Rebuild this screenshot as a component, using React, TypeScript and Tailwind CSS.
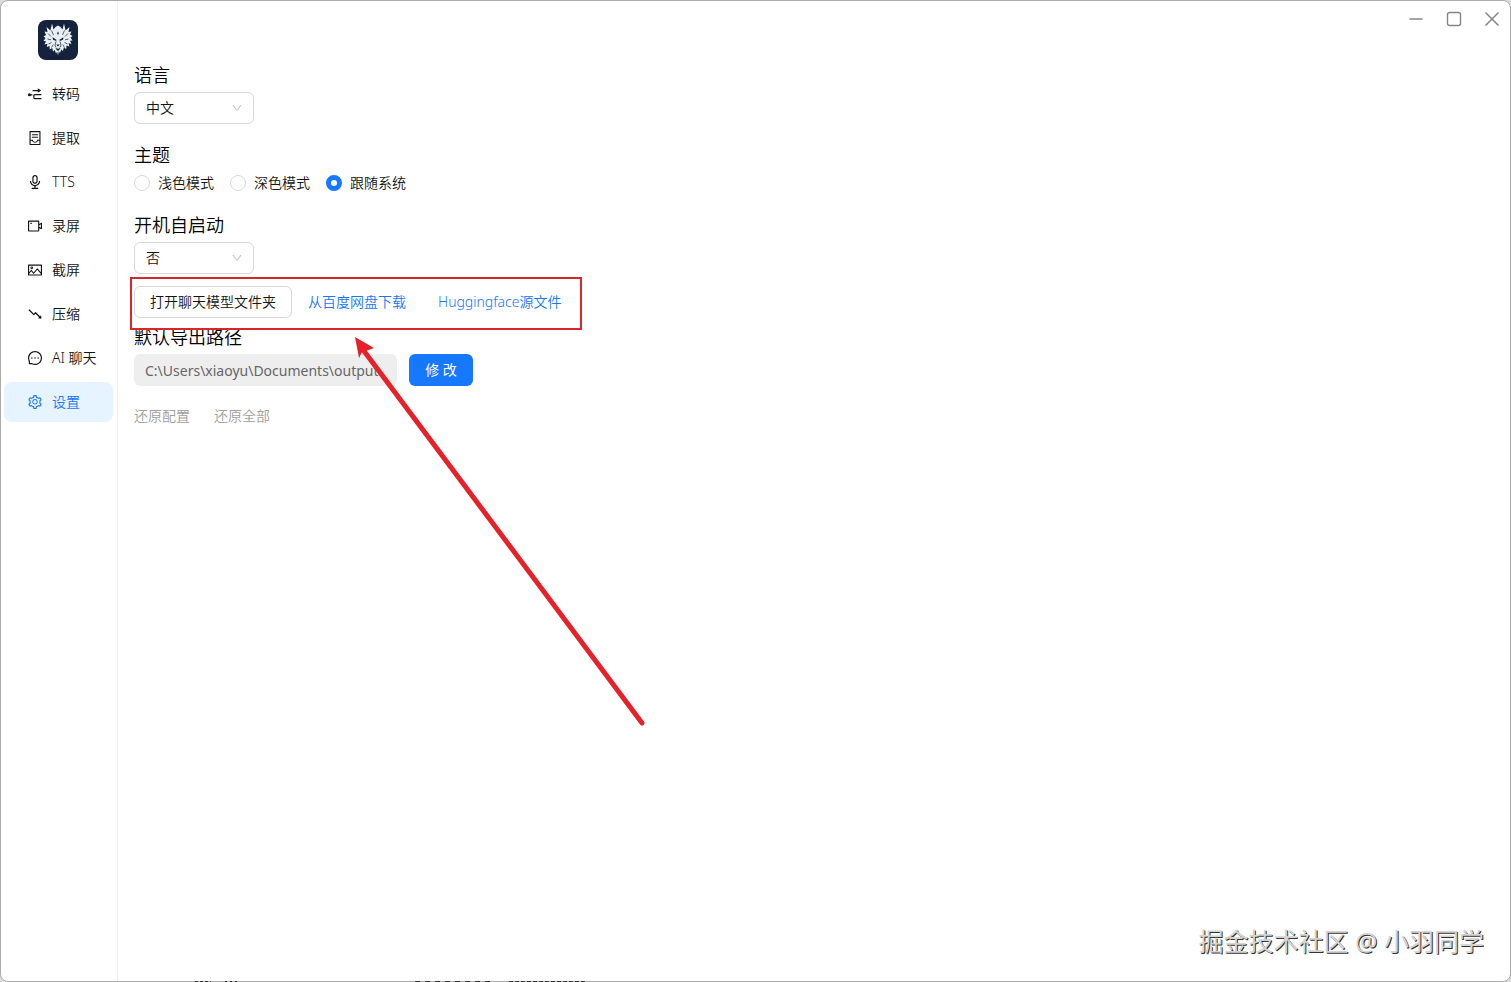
import { useState, type ReactNode } from 'react';
import {
  AiOutlineAudio,
  AiOutlineContainer,
  AiOutlineDown,
  AiOutlineFall,
  AiOutlineMessage,
  AiOutlinePicture,
  AiOutlineSetting,
  AiOutlineVideoCamera,
} from 'react-icons/ai';

function TranscodeIcon() {
  return (
    <svg viewBox="0 0 16 16" className="size-4" fill="none" stroke="currentColor" strokeWidth="1.2">
      <circle cx="2.4" cy="8.8" r="1.5" fill="currentColor" stroke="none" />
      <path d="M2.4 8.800h3M5.600 4.600h7M14.400 8.600H8q-1.200 0-1.200 1.200v1.600q0 1.200 1.200 1.200h6.400" />
      <path d="M10.800 2.200l3.400 2.400-3.400 2.200z" fill="currentColor" stroke="none" />
    </svg>
  );
}

function Logo() {
  return (
    <svg viewBox="0 0 40 40" className="size-10" role="img" aria-label="logo">
      <rect width="40" height="40" rx="8" fill="#14233b" />
      <path
        fill="#e9eef2"
        d="M14 3.500l1.500 6 2-2.500L20 5.500 22.500 7l2 2.500 1.500-6 1.600 7L31.500 7l-1 5 3-.5-1.500 3 2.500 1.500-2 1.500 2 3-2.500.2 1.500 3.300-3-.8.8 3.300-2.800-1-.3 3.500-2.400-1.500-.8 3.500-1.800-1.500-1.200 3.500-1.200-1.700L20 35.500l-.8-3.700-1.200 1.700-1.200-3.500-1.800 1.500-.8-3.500-2.400 1.500-.3-3.500-2.800 1 .8-3.300-3 .8L8 21.200 5.500 21l2-3-2-1.500L8 15l-1.500-3.500 3 .5-1-5 3.900 3.500z"
      />
      <g fill="#14233b">
        <path d="M14.500 17.200l4 2.600-.3 1.300-3.200-1.300zM25.500 17.200l-4 2.600.3 1.300 3.200-1.300zM18.200 24.500h3.600L20 26.500z" />
        <path d="M20 11.500l.9 1.700-.9 1.700-.9-1.700zM17.500 28l2.500.8 2.500-.8-1.500 2.500h-2z" />
      </g>
      <g stroke="#14233b" strokeWidth=".7" fill="none">
        <path d="M13.500 10.500l2 4.500M26.500 10.500l-2 4.500M10 13.500l3 3M30 13.500l-3 3M9.500 19l3.500.8M30.500 19l-3.500.8M10.500 24l3-1.500M29.500 24l-3-1.500M13.500 27.500l1.800-3M26.500 27.500l-1.800-3M18 21.500l-1 3.500 1 2.500M22 21.500l1 3.500-1 2.500" />
      </g>
    </svg>
  );
}

const menu: { name: string; icon: ReactNode }[] = [
  { name: '转码', icon: <TranscodeIcon /> },
  { name: '提取', icon: <AiOutlineContainer className="size-4" /> },
  { name: 'TTS', icon: <AiOutlineAudio className="size-4" /> },
  { name: '录屏', icon: <AiOutlineVideoCamera className="size-4" /> },
  { name: '截屏', icon: <AiOutlinePicture className="size-4" /> },
  { name: '压缩', icon: <AiOutlineFall className="size-4" /> },
  { name: 'AI 聊天', icon: <AiOutlineMessage className="size-4" /> },
  { name: '设置', icon: <AiOutlineSetting className="size-4" /> },
];

const themes = ['浅色模式', '深色模式', '跟随系统'];

function Select({ id, options }: { id: string; options: string[] }) {
  return (
    <div className="relative w-[120px]">
      <select
        id={id}
        className="block h-8 w-full appearance-none rounded-md border border-[#d9d9d9] bg-white px-[11px] text-sm text-[#141414] outline-none"
      >
        {options.map((o) => (
          <option key={o}>{o}</option>
        ))}
      </select>
      <AiOutlineDown className="pointer-events-none absolute top-[10px] right-[11px] size-3 text-[#bfbfbf]" />
    </div>
  );
}

export default function App() {
  const [active, setActive] = useState('设置');
  const [theme, setTheme] = useState('跟随系统');

  return (
    <div className="relative h-screen bg-[#dcdcdc] font-['Noto_Sans','Noto_Sans_CJK_SC',sans-serif] text-sm font-[350] text-[#141414]">
      <div className="relative flex h-full overflow-hidden rounded-lg border border-[#ababab] bg-white">
        <aside className="w-[117px] shrink-0 border-r border-[#f0f0f0] pt-[19px] pr-1 pl-[3px]">
          <div className="pl-[34px]">
            <Logo />
          </div>
          <nav className="mt-[14px] flex flex-col gap-1">
            {menu.map((item) => (
              <button
                key={item.name}
                onClick={() => setActive(item.name)}
                className={`flex h-10 items-center gap-[9px] rounded-lg pl-[23px] ${
                  active === item.name ? 'bg-[#e6f4ff] text-[#1677ff]' : ''
                }`}
              >
                {item.icon}
                <span>{item.name}</span>
              </button>
            ))}
          </nav>
        </aside>

        <main className="min-w-0 flex-1 px-4 pt-[62px]">
          <label htmlFor="language" className="mb-[5px] block text-lg leading-6 text-black">语言</label>
          <Select id="language" options={['中文', 'English']} />

          <fieldset className="mt-[19px]">
            <legend className="mb-[5px] text-lg leading-6 text-black">主题</legend>
            <div className="flex gap-4">
              {themes.map((t) => (
                <label key={t} className="flex h-[22px] items-center gap-2">
                  <input
                    type="radio"
                    name="theme"
                    checked={theme === t}
                    onChange={() => setTheme(t)}
                    className="size-4 appearance-none rounded-full border border-[#d9d9d9] bg-white checked:border-[5px] checked:border-[#1677ff]"
                  />
                  {t}
                </label>
              ))}
            </div>
          </fieldset>

          <label htmlFor="autostart" className="mt-[19px] mb-[5px] block text-lg leading-6 text-black">开机自启动</label>
          <Select id="autostart" options={['否', '是']} />

          <div className="relative mt-3 flex w-fit items-center">
            <button className="h-8 rounded-md border border-[#d9d9d9] px-[15px]">打开聊天模型文件夹</button>
            <a href="#baidu" className="px-4 text-[#1677ff]">从百度网盘下载</a>
            <a href="#huggingface" className="px-4 text-[#1677ff]">Huggingface源文件</a>
            <div className="pointer-events-none absolute -top-[9px] -right-[5px] -bottom-3 -left-1 z-10 border-2 border-[#d9262c]" />
          </div>

          <label htmlFor="path" className="mt-[7px] mb-[5px] block text-lg leading-6 text-black">默认导出路径</label>
          <div className="flex gap-3">
            <input
              id="path"
              disabled
              defaultValue="C:\Users\xiaoyu\Documents\output"
              className="h-8 w-[263px] rounded-md bg-[#eeeeee] px-[11px] text-sm font-normal text-[#666]"
            />
            <button className="h-8 w-16 rounded-md bg-[#1677ff] font-normal text-white">修 改</button>
          </div>

          <div className="mt-5 flex gap-6 text-[#a0a0a0]">
            <button>还原配置</button>
            <button>还原全部</button>
          </div>
        </main>

        <div className="absolute top-[10px] right-[10px] flex gap-[22px] text-[#858585]">
          <button aria-label="最小化">
            <svg viewBox="0 0 16 16" className="size-4" stroke="currentColor" strokeWidth="1.500">
              <path d="M1.500 8h13" />
            </svg>
          </button>
          <button aria-label="最大化">
            <svg viewBox="0 0 16 16" className="size-4" fill="none" stroke="currentColor" strokeWidth="1.400">
              <rect x="1.500" y="1.500" width="13" height="13" rx="2" />
            </svg>
          </button>
          <button aria-label="关闭">
            <svg viewBox="0 0 16 16" className="size-4" stroke="currentColor" strokeWidth="1.500">
              <path d="M1.500 1.500l13 13M14.500 1.500l-13 13" />
            </svg>
          </button>
        </div>

        <svg
          viewBox="0 0 300 400"
          className="pointer-events-none absolute top-[329px] left-[349px] z-20 h-[400px] w-[300px]"
          fill="#e62129"
        >
          <path d="M14 21 292 393" stroke="#e62129" strokeWidth="5" strokeLinecap="round" />
          <path d="M5 7l19 11-8 3-4 1-3 6z" />
        </svg>

        <p className="absolute right-[26px] bottom-[22px] text-[25px] leading-9 font-normal text-[#d4d4d4] [text-shadow:1px_1px_0_#333]">
          掘金技术社区 @ 小羽同学
        </p>
      </div>

      {/* tops of the window underneath, peeking out below the frame */}
      <svg
        aria-hidden="true"
        className="pointer-events-none absolute bottom-0 left-[195px] h-px w-[392px]"
        viewBox="0 0 392 1"
        stroke="#333"
        strokeWidth="1"
      >
        <path d="M0 .5h16" strokeDasharray="3 2" />
        <path d="M30 .5h14" strokeDasharray="2 3" />
        <path d="M220 .5h78" strokeDasharray="5 5" />
        <path d="M314 .5h78" strokeDasharray="4 2" />
      </svg>
    </div>
  );
}
